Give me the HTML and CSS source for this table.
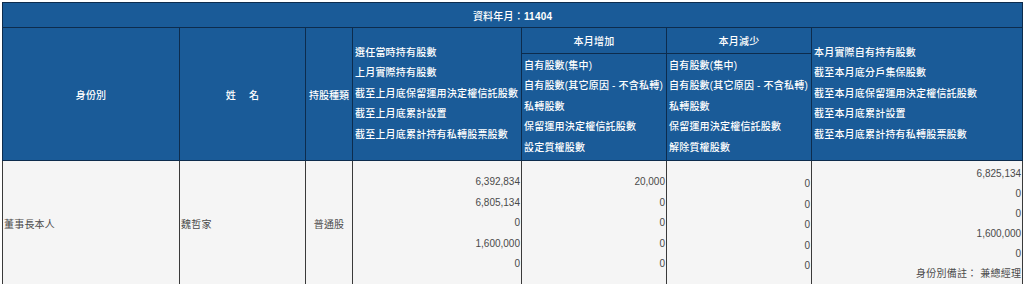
FILE: index.html
```html
<!DOCTYPE html>
<html lang="zh-Hant">
<head>
<meta charset="utf-8">
<title>資料年月：11404</title>
<link rel="stylesheet" href="styles.css">
</head>
<body>
<div class="wrap">
<table class="holdings">
  <colgroup>
    <col class="c1"><col class="c2"><col class="c3"><col class="c4"><col class="c5"><col class="c6"><col class="c7">
  </colgroup>
  <thead>
    <tr class="title-row">
      <th colspan="7" class="title">資料年月：<b>11404</b></th>
    </tr>
    <tr class="head-top">
      <th rowspan="2" class="center">身份別</th>
      <th rowspan="2" class="center">姓　&nbsp;名</th>
      <th rowspan="2" class="center tight">持股種類</th>
      <th rowspan="2" class="list">選任當時持有股數<br>上月實際持有股數<br>截至上月底保留運用決定權信託股數<br>截至上月底累計設置<br>截至上月底累計持有私轉股票股數</th>
      <th class="center sub">本月增加</th>
      <th class="center sub">本月減少</th>
      <th rowspan="2" class="list">本月實際自有持有股數<br>截至本月底分戶集保股數<br>截至本月底保留運用決定權信託股數<br>截至本月底累計設置<br>截至本月底累計持有私轉股票股數</th>
    </tr>
    <tr class="head-bottom">
      <th class="list">自有股數(集中)<br>自有股數(其它原因 - 不含私轉)<br>私轉股數<br>保留運用決定權信託股數<br>設定質權股數</th>
      <th class="list">自有股數(集中)<br>自有股數(其它原因 - 不含私轉)<br>私轉股數<br>保留運用決定權信託股數<br>解除質權股數</th>
    </tr>
  </thead>
  <tbody>
    <tr class="data-row">
      <td class="left">董事長本人</td>
      <td class="left">魏哲家</td>
      <td class="center">普通股</td>
      <td class="num">6,392,834<br>6,805,134<br>0<br>1,600,000<br>0</td>
      <td class="num">20,000<br>0<br>0<br>0<br>0</td>
      <td class="num lower">0<br>0<br>0<br>0<br>0</td>
      <td class="num last">6,825,134<br>0<br>0<br>1,600,000<br>0<br><span class="note">身份別備註：&nbsp;兼總經理</span></td>
    </tr>
  </tbody>
</table>
</div>
</body>
</html>
```

FILE: styles.css
```css
html, body {
  margin: 0;
  padding: 0;
  background: #ffffff;
}

.wrap {
  padding: 2px 2px 0 2px;
}

.holdings {
  width: 1020px;
  table-layout: fixed;
  border-collapse: collapse;
  font-family: "Liberation Sans", Arial, "Noto Sans CJK TC", sans-serif;
  font-size: 10px;
}

.c1 { width: 177px; }
.c2 { width: 126px; }
.c3 { width: 47px; }
.c4 { width: 169px; }
.c5 { width: 145px; }
.c6 { width: 145px; }
.c7 { width: 211px; }

.holdings th {
  background: #1a5b98;
  color: #ffffff;
  border: 1px solid #0d2c4d;
  font-weight: 500;
  padding: 0;
  vertical-align: middle;
  white-space: nowrap;
  letter-spacing: 0.2px;
}

.title-row th {
  height: 24px;
}

.title b {
  font-weight: bold;
}

.head-top .sub {
  height: 25px;
}

.head-bottom th {
  height: 106px;
}

.holdings th.center {
  text-align: center;
}

.holdings th.tight {
  letter-spacing: 0;
}

.holdings th.list {
  text-align: left;
  padding-left: 2px;
  line-height: 20.5px;
}

.holdings td {
  background: #f5f5f5;
  color: #4a4a4a;
  border: 1px solid #3a3a3a;
  padding: 0 1px;
  height: 121px;
  vertical-align: middle;
  white-space: nowrap;
  letter-spacing: 0.2px;
}

.holdings td.left {
  text-align: left;
}

.holdings td.center {
  text-align: center;
}

.holdings td.num {
  text-align: right;
  line-height: 20.5px;
  letter-spacing: 0;
}

.holdings td.lower {
  padding-top: 4px;
}

.holdings td.last {
  line-height: 20px;
  padding-top: 0;
}

.note {
  letter-spacing: 0.2px;
}
```
